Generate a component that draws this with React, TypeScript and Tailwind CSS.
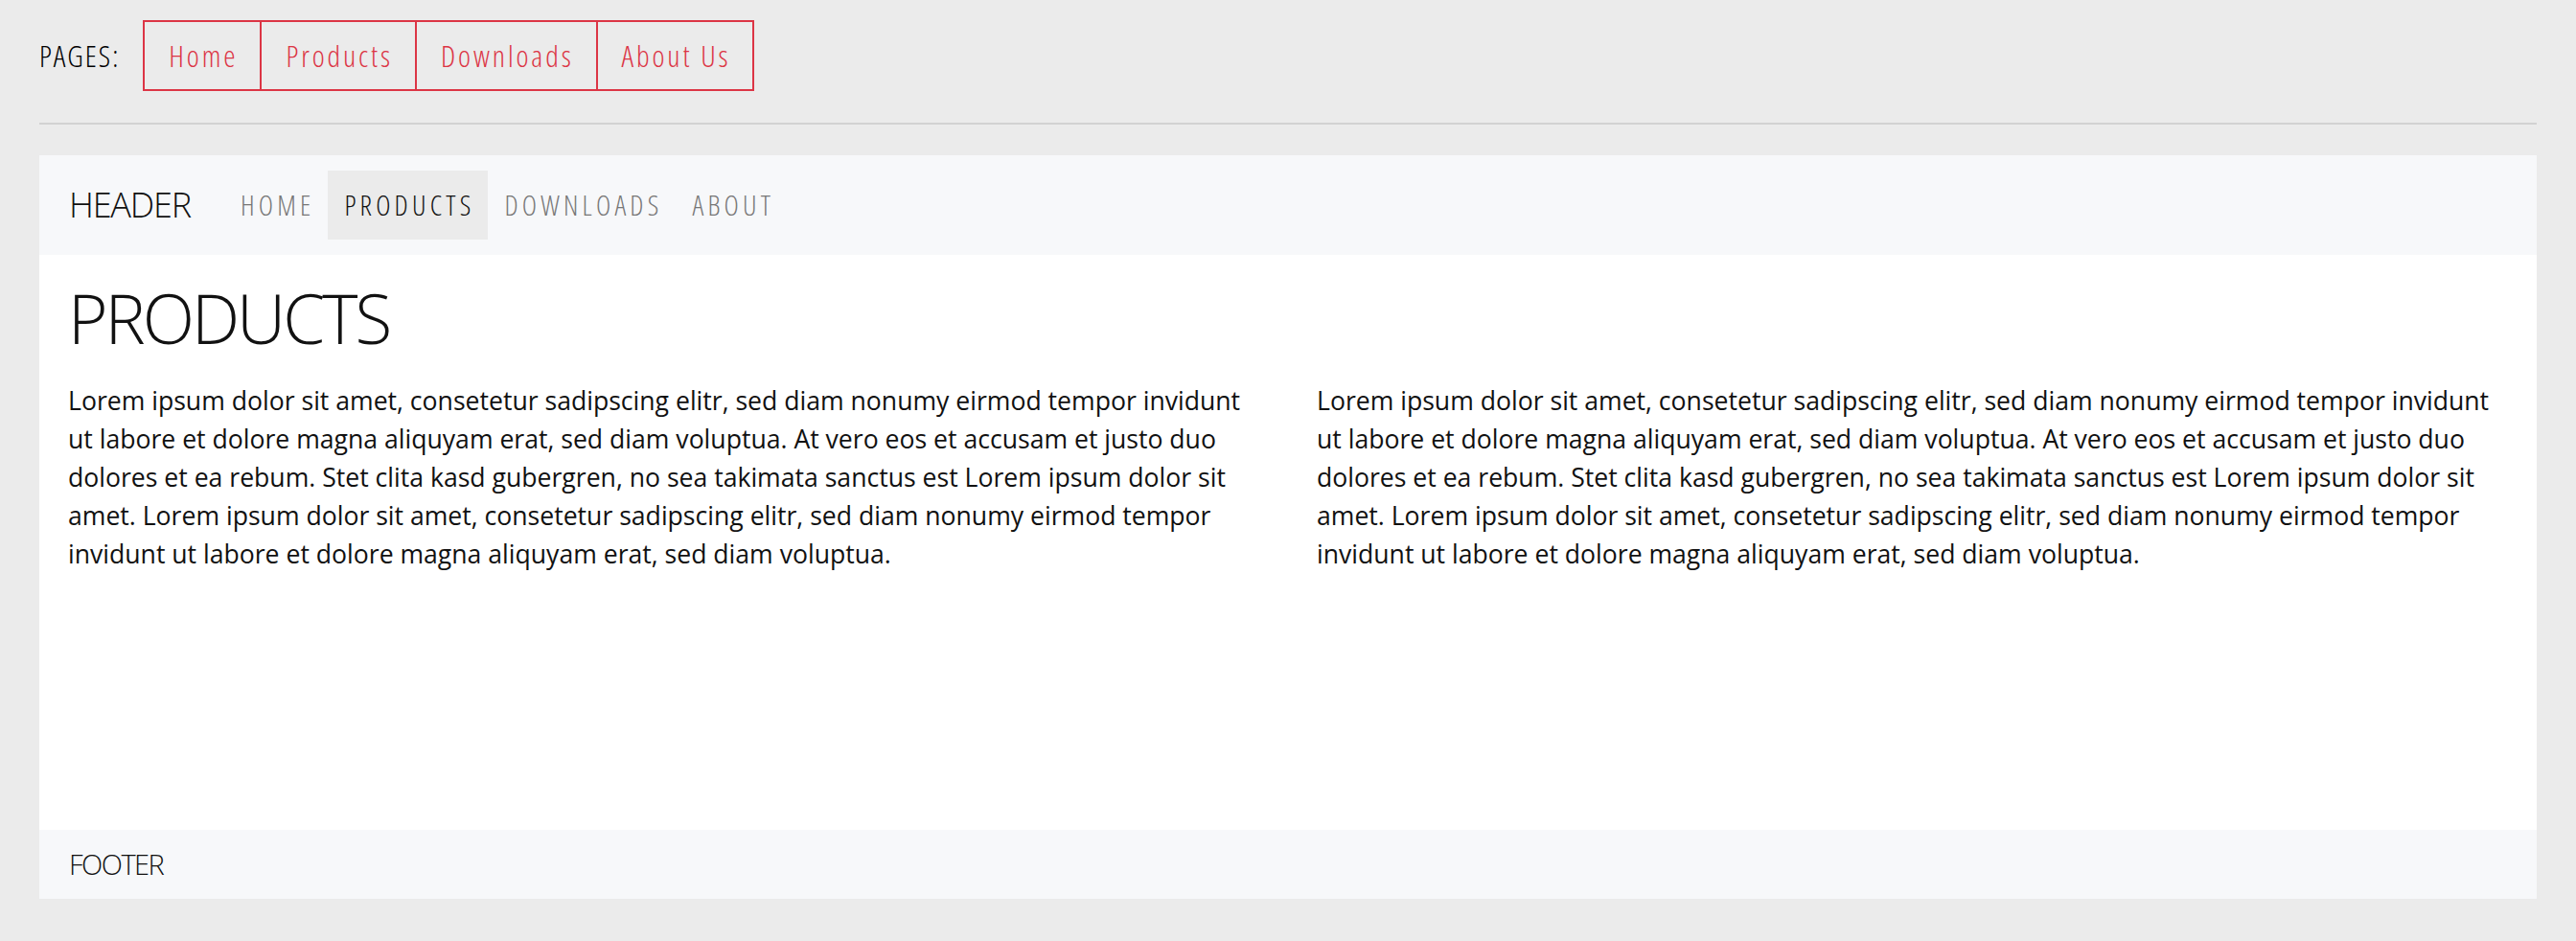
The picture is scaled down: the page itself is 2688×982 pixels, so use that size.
import React from 'react';

const lorem =
  'Lorem ipsum dolor sit amet, consetetur sadipscing elitr, sed diam nonumy eirmod tempor invidunt ut labore et dolore magna aliquyam erat, sed diam voluptua. At vero eos et accusam et justo duo dolores et ea rebum. Stet clita kasd gubergren, no sea takimata sanctus est Lorem ipsum dolor sit amet. Lorem ipsum dolor sit amet, consetetur sadipscing elitr, sed diam nonumy eirmod tempor invidunt ut labore et dolore magna aliquyam erat, sed diam voluptua.';

const pages = ['Home', 'Products', 'Downloads', 'About Us'];
const navItems = ['HOME', 'PRODUCTS', 'DOWNLOADS', 'ABOUT'];

export default function App() {
  return (
    <div className="min-h-screen bg-[#ebebeb] px-[41px] pt-[21px] pb-[44px] font-['Open_Sans',sans-serif] font-light text-[#111]">
      {/* Page switcher */}
      <div className="flex items-center h-[74px] [font-stretch:75%]">
        <span className="text-[31px] tracking-[2px] text-black mr-[24px]">PAGES:</span>
        <div className="flex h-full border-2 border-[#dc3545]">
          {pages.map((p, i) => (
            <button
              key={p}
              className={`pl-[25px] pr-[23px] text-[31px] tracking-[2.9px] text-[#dc3545] ${i > 0 ? 'border-l-2 border-[#dc3545]' : ''}`}
            >
              {p}
            </button>
          ))}
        </div>
      </div>

      <div className="mt-[33px] border-t-2 border-[#d2d2d2]" />

      {/* Site preview */}
      <div className="mt-[32px]">
        <header className="h-[104px] bg-[#f7f8fa] px-[31px] flex items-center">
          <span className="text-[36px] tracking-[-1.2px] mr-[35px]">HEADER</span>
          <nav className="flex [font-stretch:75%]">
            {navItems.map((n, i) => (
              <span
                key={n}
                className={`pl-[17px] pr-[14px] py-[16px] text-[29px] tracking-[4.2px] leading-[40px] ${i === 1 ? 'bg-[#ebebeb] text-[#111]' : 'text-[#777]'}`}
              >
                {n}
              </span>
            ))}
          </nav>
        </header>

        <main className="h-[600px] bg-white px-[30px] pt-[27px]">
          <h1 className="text-[71px] tracking-[-3px] leading-[1.1]">PRODUCTS</h1>
          <div className="grid grid-cols-2 gap-[60px] mt-[27px] font-normal">
            <p className="text-[26.6px] leading-[40px]">{lorem}</p>
            <p className="text-[26.6px] leading-[40px]">{lorem}</p>
          </div>
        </main>

        <footer className="h-[72px] bg-[#f7f8fa] px-[31px] flex items-center">
          <span className="text-[29px] tracking-[-1.5px]">FOOTER</span>
        </footer>
      </div>
    </div>
  );
}
